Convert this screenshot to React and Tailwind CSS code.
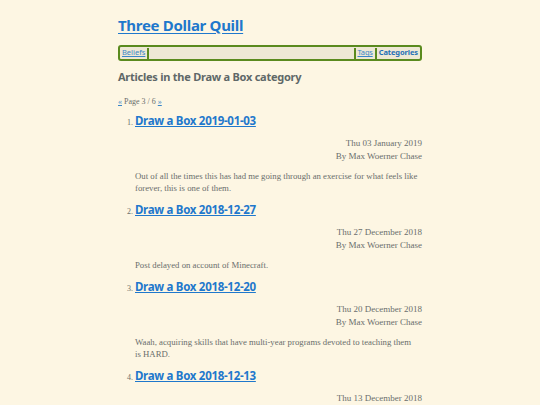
const posts = [
  {
    title: 'Draw a Box 2019-01-03',
    date: 'Thu 03 January 2019',
    summary: 'Out of all the times this has had me going through an exercise for what feels like forever, this is one of them.',
  },
  {
    title: 'Draw a Box 2018-12-27',
    date: 'Thu 27 December 2018',
    summary: 'Post delayed on account of Minecraft.',
  },
  {
    title: 'Draw a Box 2018-12-20',
    date: 'Thu 20 December 2018',
    summary: 'Waah, acquiring skills that have multi-year programs devoted to teaching them is\u00a0HARD.',
  },
  {
    title: 'Draw a Box 2018-12-13',
    date: 'Thu 13 December 2018',
    summary: 'Another week, another box.',
  },
];

const heading = { fontFamily: '"Noto Sans", "Open Sans", sans-serif' };
const body = { fontFamily: '"Liberation Serif", "DejaVu Serif", serif' };

function Sep() {
  return <span className="inline-block w-[2px] h-[11px] bg-[#5a8a1e] mx-[2px]" />;
}

export default function App() {
  return (
    <div className="h-[405px] overflow-hidden bg-[#fdf6e3] text-[#6a6e6c]" style={body}>
      <div className="w-[304px] mx-auto pt-[14px]">
        <h1 className="text-[15px] leading-[22px] font-bold tracking-[-0.3px]" style={heading}>
          <a href="#" className="text-[#1f78cc] underline underline-offset-2">Three Dollar Quill</a>
        </h1>
        <nav
          className="mt-[9px] h-[16px] flex items-center border-2 border-[#5a8a1e] rounded-[3px] bg-[#eee8d5] px-[2px] text-[7.5px]"
          style={heading}
        >
          <a href="#" className="text-[#3a86c8] underline">Beliefs</a>
          <Sep />
          <div className="flex-1" />
          <Sep />
          <a href="#" className="text-[#3a86c8] underline tracking-[-0.2px]">Tags</a>
          <Sep />
          <a href="#" className="text-[#1f6fb5] font-bold tracking-[-0.1px]">Categories</a>
        </nav>
        <h2 className="mt-[8px] text-[11px] leading-[16px] font-bold tracking-[-0.25px] text-[#5f6868]" style={heading}>
          Articles in the Draw a Box category
        </h2>
        <p className="mt-[12px] text-[8px] leading-[10px]">
          <a href="#" className="text-[#3a86c8] underline">«</a> Page 3 / 6{' '}
          <a href="#" className="text-[#3a86c8] underline">»</a>
        </p>
        <ol className="mt-[5px] pl-[17px] list-decimal">
          {posts.map((p) => (
            <li key={p.title} className="text-[8px] marker:text-[#6a6e6c] mb-[7px]">
              <h3 className="text-[11.5px] leading-[18px] font-bold tracking-[-0.3px]" style={heading}>
                <a href="#" className="text-[#1f78cc] underline">{p.title}</a>
              </h3>
              <div className="mt-[7px] text-right text-[9px] leading-[13px]">
                <div>{p.date}</div>
                <div>By Max Woerner Chase</div>
              </div>
              <p className="mt-[7px] text-[8.75px] leading-[12px]">{p.summary}</p>
            </li>
          ))}
        </ol>
      </div>
    </div>
  );
}
